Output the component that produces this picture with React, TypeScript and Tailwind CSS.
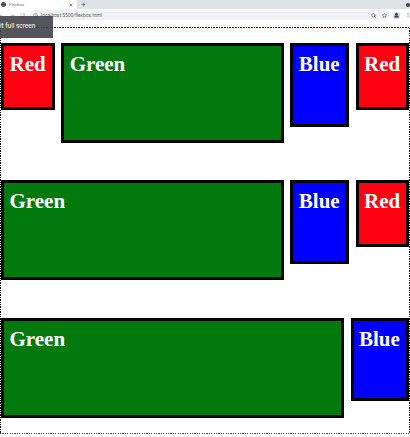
import { ArrowLeft, ArrowRight, Globe, Info, MoreVertical, Plus, RotateCw, Search, Star, X } from "lucide-react";

type Tone = "Red" | "Green" | "Blue";

const tones: Record<Tone, string> = {
  Red: "h-[67px] w-[53.5px] shrink-0 bg-[#ff0010]",
  Green: "h-[100px] flex-1 bg-[#02790c]",
  Blue: "h-[83.5px] w-[58.5px] shrink-0 bg-[#0000fe]",
};

function Box({ tone }: { tone: Tone }) {
  return (
    <div
      className={`border-[3px] border-[#050505] pl-[5.5px] pt-[6px] font-['Liberation_Serif',serif] text-[21px] font-bold leading-[24px] text-white ${tones[tone]}`}
    >
      {tone}
    </div>
  );
}

function Row({ items }: { items: Tone[] }) {
  return (
    <div className="flex h-[137.4px] items-start gap-[6.7px]">
      {items.map((tone, i) => (
        <Box key={i} tone={tone} />
      ))}
    </div>
  );
}

const dotsTop = "h-[1.5px] bg-[repeating-linear-gradient(90deg,#111_0_1.6px,#fff_1.6px_2.7px)]";
const dotsBottom = "h-[1.5px] bg-[repeating-linear-gradient(90deg,#444_0_1.2px,#fff_1.2px_2.4px)]";
const dotsSide = "w-px bg-[repeating-linear-gradient(180deg,#111_0_1.3px,#fff_1.3px_2.4px)]";

export default function App() {
  return (
    <div className="relative h-[437px] w-[410px] overflow-hidden bg-white font-['Roboto',sans-serif]">
      <header className="h-[22px]">
        <div className="flex h-[9px] items-center bg-[#dfe2e7]">
          <div className="flex h-[9px] w-[77px] items-center bg-white pl-[1px] text-[4.4px] leading-[7px] text-[#777]">
            <Globe size={5} strokeWidth={4} className="mr-[3px] text-[#222]" />
            <span>Flexbox</span>
            <X size={4} strokeWidth={4} className="ml-auto mr-[4px] text-[#555]" />
          </div>
          <Plus size={5} strokeWidth={3} className="ml-[4px] text-[#555]" />
          <span className="ml-auto size-[4px] rounded-full bg-[#444]" />
        </div>
        <div className="flex h-[12px] items-center bg-white text-[#888]">
          <ArrowLeft size={5} className="ml-[-2px]" />
          <ArrowRight size={5} className="ml-[7px]" />
          <RotateCw size={5} className="ml-[5px]" />
          <div className="ml-[5px] flex h-[10px] flex-1 items-center rounded-full bg-[#f0f2f4] pl-[5px] pr-[2px]">
            <Info size={5} strokeWidth={3} className="-ml-[2px]" />
            <span className="ml-[3px] whitespace-nowrap text-[4.9px] leading-[9px] text-[#666]">
              localhost:5500/flexbox.html
            </span>
            <Search size={5} strokeWidth={3} className="ml-auto text-[#555]" />
            <Star size={5} strokeWidth={3} className="ml-[6px] text-[#555]" />
          </div>
          <svg viewBox="0 0 14 14" className="ml-[4px] size-[7px]">
            <circle cx="7" cy="7" r="7" fill="#ccd8e5" />
            <circle cx="7" cy="5" r="2.8" fill="#344154" />
            <path d="M2 11c0-5 10-5 10 0z" fill="#344154" />
          </svg>
          <MoreVertical size={6} className="ml-[5px] mr-[-1px]" />
        </div>
      </header>

      <main className="mt-[4.6px] flex h-[407.6px] w-[410px] flex-col">
        <div className={`shrink-0 ${dotsTop}`} />
        <div className="flex min-h-0 flex-1">
          <div className={dotsSide} />
          <div className="min-w-0 flex-1 pt-[15px]">
            <Row items={["Red", "Green", "Blue", "Red"]} />
            <Row items={["Green", "Blue", "Red"]} />
            <Row items={["Green", "Blue"]} />
          </div>
          <div className={dotsSide} />
        </div>
        <div className={`shrink-0 ${dotsBottom}`} />
      </main>

      <div className="absolute left-0 top-[16px] h-[21.5px] w-[53px] overflow-hidden whitespace-nowrap bg-[#414449]/90 text-[6.5px] leading-[21px] text-white">
        it full screen
      </div>
    </div>
  );
}
